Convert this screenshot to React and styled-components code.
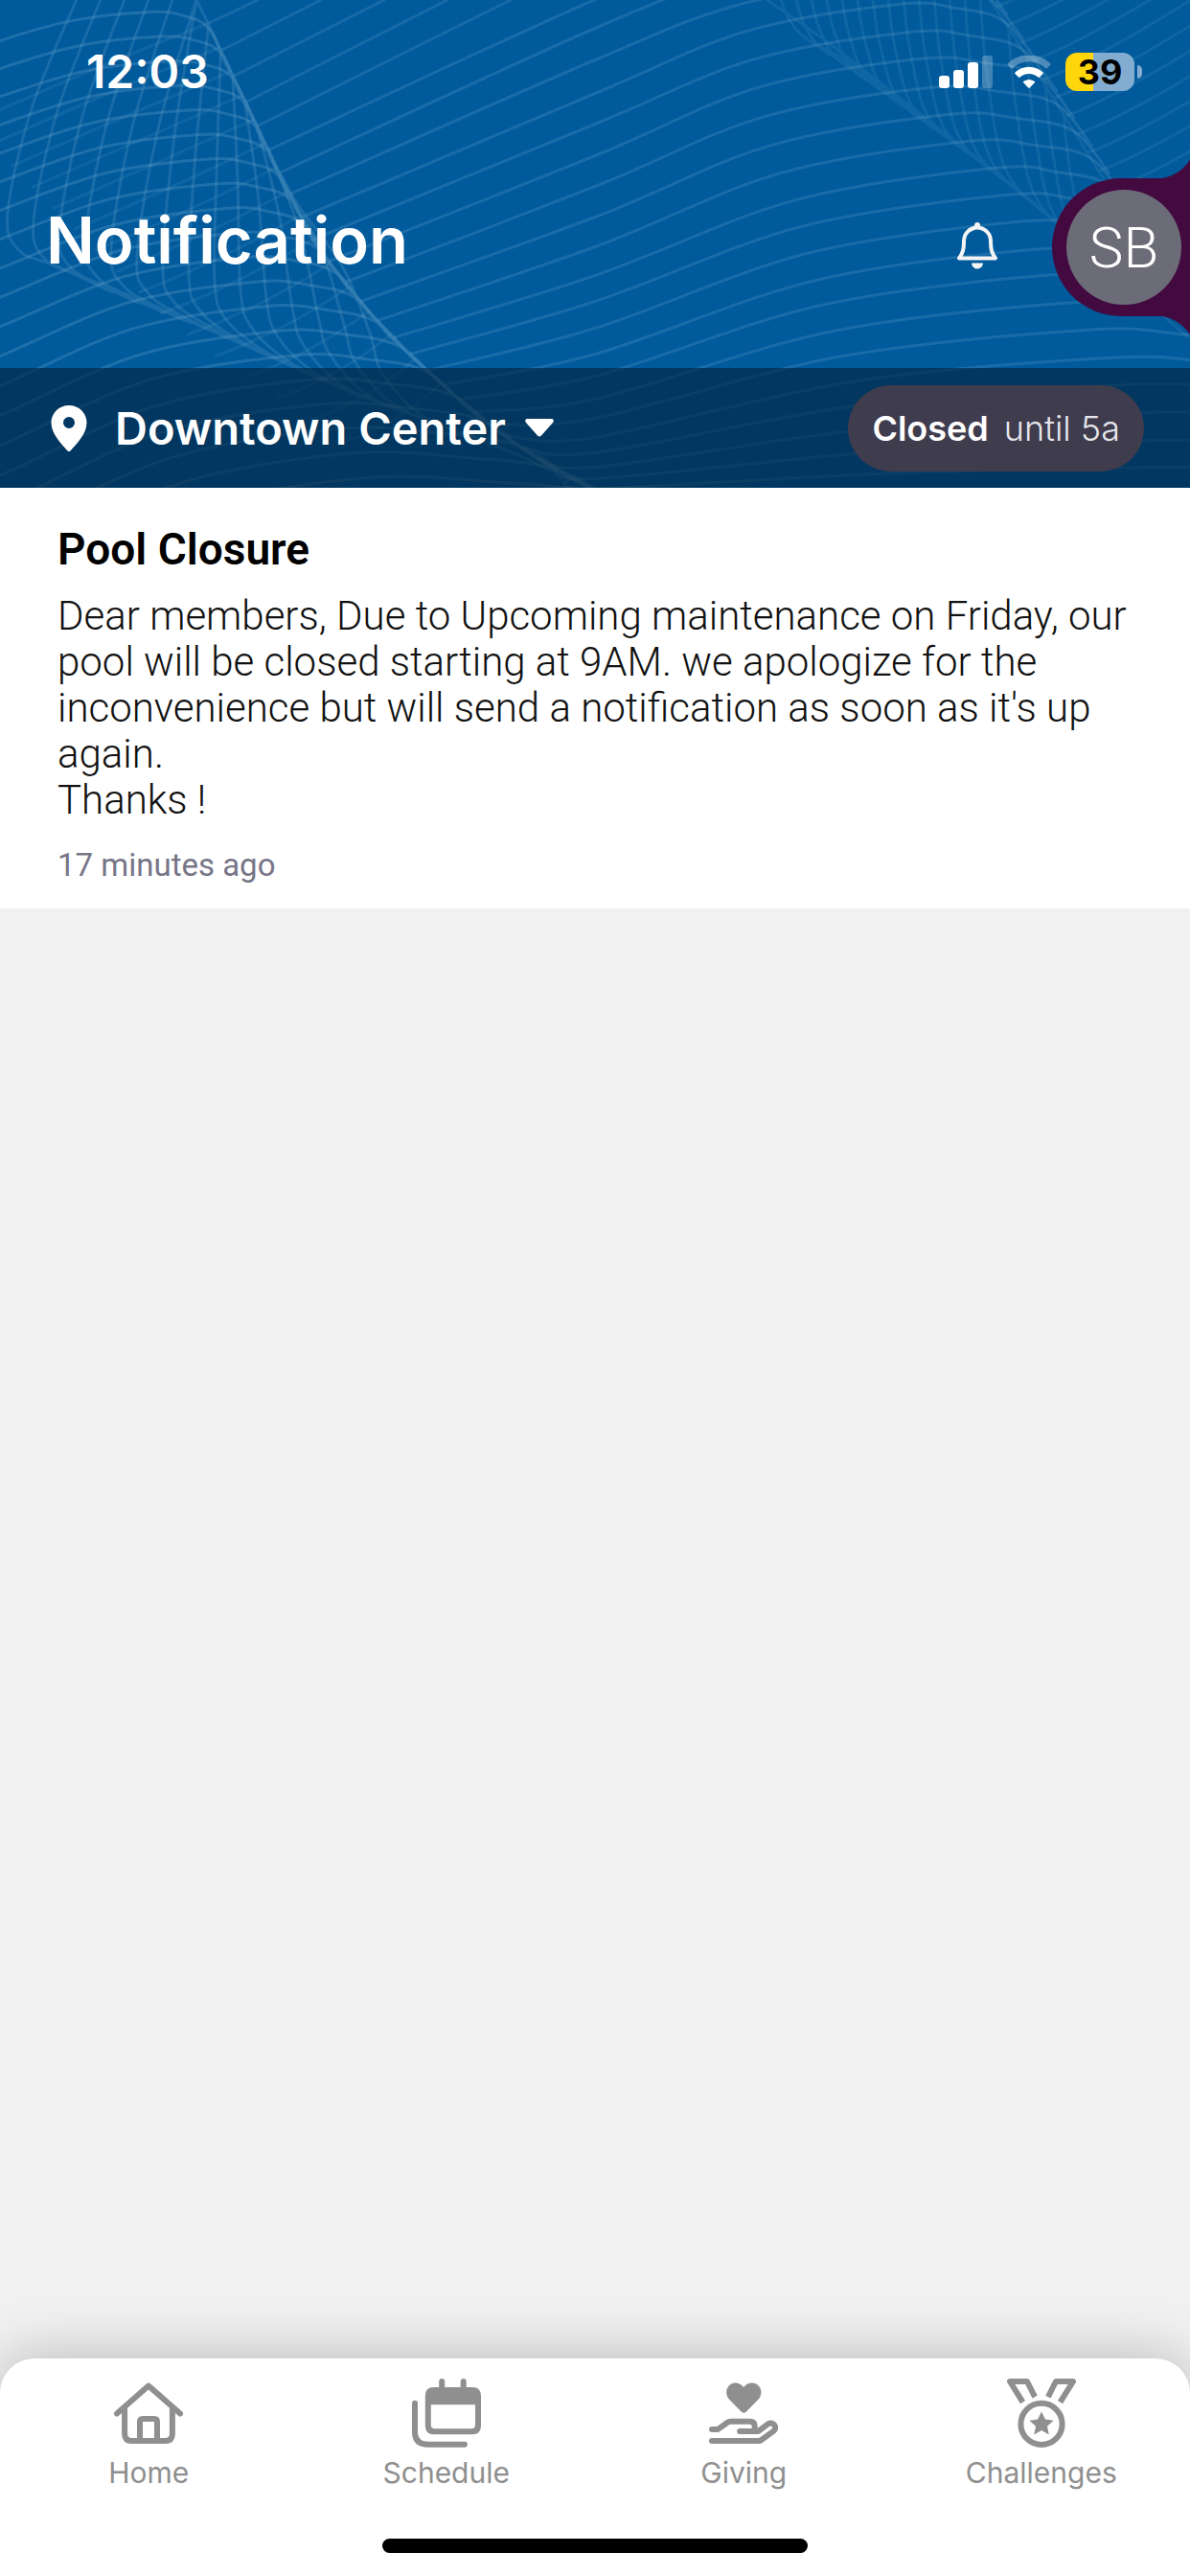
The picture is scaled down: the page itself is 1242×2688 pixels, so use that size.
import React from "react";
import styled, { createGlobalStyle } from "styled-components";

const GlobalStyle = createGlobalStyle`
  * {
    box-sizing: border-box;
  }
  body {
    margin: 0;
    background-color: #f1f1f1;
    font-family: Inter, "Liberation Sans", sans-serif;
  }
  h1, h2, p {
    margin: 0;
  }
  button {
    border: none;
    padding: 0;
    background: none;
    color: inherit;
    font-family: inherit;
    cursor: pointer;
  }
  svg {
    display: block;
  }
`;

const LayoutPage = styled.div`
  min-height: 100vh;
  display: flex;
  flex-direction: column;
`;

const Header = styled.header`
  position: relative;
  overflow: hidden;
  background-color: #005a9c;
  color: #ffffff;
`;

const WavesSvg = styled.svg`
  position: absolute;
  top: 0;
  left: 0;
  width: 100%;
  height: 100%;
  fill: none;
  stroke: #7fb4d6;
  stroke-width: 3;
`;

const StatusBar = styled.div`
  position: relative;
  display: flex;
  justify-content: space-between;
  align-items: center;
  height: 150px;
  padding: 0 50px 0 90px;
`;

const Clock = styled.span`
  font-size: 48px;
  font-weight: 600;
  line-height: 48px;
`;

const StatusIcons = styled.div`
  display: flex;
  align-items: center;
  gap: 15px;
`;

const Battery = styled.div`
  display: flex;
  align-items: center;
  gap: 3px;
`;

const BatteryBody = styled.div`
  width: 72px;
  height: 40px;
  border-radius: 12px;
  background: linear-gradient(to right, #ffd60a 40%, #82add0 40%);
  color: #000000;
  font-size: 36px;
  font-weight: 700;
  line-height: 40px;
  text-align: center;
`;

const BatteryTip = styled.div`
  width: 5px;
  height: 14px;
  border-radius: 0 5px 5px 0;
  background-color: #82add0;
`;

const TitleRow = styled.div`
  position: relative;
  display: flex;
  align-items: center;
  padding: 36px 0 54px 48px;
`;

const Title = styled.h1`
  flex: 1;
  padding-bottom: 14px;
  font-size: 67px;
  font-weight: 600;
  line-height: 84px;
`;

const BellButton = styled.button`
  margin-right: 56px;
  padding-bottom: 4px;
`;

const ProfileTab = styled.button`
  position: relative;
  height: 144px;
  padding: 0 9px 0 15px;
  border-radius: 72px 0 0 72px;
  background-color: #430a40;

  &::before,
  &::after {
    content: "";
    position: absolute;
    right: 0;
    width: 36px;
    height: 42px;
  }
  &::before {
    bottom: 100%;
    background: radial-gradient(circle at 0 0, transparent 42px, #430a40 43px);
  }
  &::after {
    top: 100%;
    background: radial-gradient(circle at 0 100%, transparent 42px, #430a40 43px);
  }
`;

const Avatar = styled.span`
  display: flex;
  justify-content: center;
  align-items: center;
  width: 120px;
  height: 120px;
  border-radius: 50%;
  background-color: #6c6b78;
  color: #ffffff;
  font-family: Roboto, sans-serif;
  font-size: 60px;
  font-weight: 300;
`;

const LocationBar = styled.div`
  position: relative;
  display: flex;
  justify-content: space-between;
  align-items: center;
  height: 125px;
  padding: 0 48px;
  background-color: rgba(1, 32, 56, 0.6);
`;

const LocationButton = styled.button`
  display: flex;
  align-items: center;
  font-size: 47px;
  font-weight: 600;
  line-height: 60px;

  span {
    margin: 0 20px 0 24px;
  }
`;

const HoursPill = styled.div`
  display: flex;
  align-items: center;
  gap: 16px;
  height: 90px;
  padding: 0 25px;
  border-radius: 45px;
  background-color: #3f3c4e;
  font-size: 36px;
  font-weight: 300;
  color: #e6e6ea;

  strong {
    font-weight: 600;
    color: #ffffff;
  }
`;

const Content = styled.main`
  flex: 1;
`;

const NotificationCard = styled.article`
  padding: 36px 60px 24px;
  background-color: #ffffff;
  font-family: Roboto, sans-serif;
`;

const CardTitle = styled.h2`
  color: #000000;
  font-size: 46px;
  font-weight: 600;
  line-height: 56px;
`;

const CardText = styled.p`
  margin-top: 18px;
  color: #111111;
  font-size: 42px;
  font-weight: 300;
  line-height: 48px;
`;

const CardTime = styled.p`
  margin-top: 23px;
  color: #777587;
  font-size: 33px;
  line-height: 42px;
`;

const BottomNav = styled.nav`
  padding: 21px 0 24px;
  border-radius: 36px 36px 0 0;
  background-color: #ffffff;
  box-shadow: 0 0 60px rgba(0, 0, 0, 0.25);
`;

const Tabs = styled.div`
  display: grid;
  grid-template-columns: repeat(4, 1fr);
`;

const Tab = styled.a`
  display: flex;
  flex-direction: column;
  align-items: center;
  gap: 8px;
  color: #8f8f8f;
  font-size: 30px;
  line-height: 36px;
  text-decoration: none;
`;

const HomeIndicator = styled.div`
  width: 444px;
  height: 15px;
  margin: 51px auto 0;
  border-radius: 8px;
  background-color: #000000;
`;

// smooth path through a list of points
function curve(points) {
  let d = `M${points[0][0]} ${points[0][1]}`;
  for (let i = 0; i < points.length - 1; i++) {
    const p0 = points[i - 1] || points[i];
    const p1 = points[i];
    const p2 = points[i + 1];
    const p3 = points[i + 2] || p2;
    d += `C${p1[0] + (p2[0] - p0[0]) / 6} ${p1[1] + (p2[1] - p0[1]) / 6} `;
    d += `${p2[0] - (p3[0] - p1[0]) / 6} ${p2[1] - (p3[1] - p1[1]) / 6} `;
    d += `${p2[0]} ${p2[1]}`;
  }
  return d;
}

// x of a fold edge at a given y
function edgeX(edge, y) {
  for (let i = 0; i < edge.length - 1; i++) {
    const [x1, y1] = edge[i];
    const [x2, y2] = edge[i + 1];
    if (y <= y2 || i === edge.length - 2) {
      return x1 + ((x2 - x1) * (y - y1)) / (y2 - y1);
    }
  }
}

function edgeY(edge, x) {
  return edgeX(edge.map(([a, b]) => [b, a]), x);
}

const foldA = [
  [205, 0], [228, 47], [258, 110], [296, 190], [330, 255],
  [372, 310], [412, 355], [455, 395], [500, 435], [555, 475], [621, 512],
];
const foldB = [
  [-60, 190], [0, 252], [52, 278], [135, 313], [220, 345],
  [290, 376], [365, 409], [450, 440], [540, 475], [621, 512],
];
const foldC = [
  [1033, 0], [1072, 60], [1112, 123], [1152, 187], [1200, 250], [1260, 310],
];
const foldD = [
  [800, 0], [867, 47], [960, 120], [1036, 178], [1100, 230], [1180, 300],
];

const crests = Array.from({ length: 20 }, (_, n) => {
  const xc = 158 + n * 10 + (n > 12 ? (n - 12) * 4 : 0);
  const yc = 13 + n * 25.6;
  const ys = 43 + n * 29 + (n * n) / 12;
  const end = yc + 17;
  const xe = edgeX(foldA, end);
  return [
    [-90, ys + 34],
    [0, ys],
    [xc * 0.5, yc + (ys - yc) * 0.28],
    [xc, yc],
    [xc + (xe - xc) * 0.55, yc + 4],
    [xe - 2, end],
    [edgeX(foldA, end + 40) - 2, end + 40],
    [edgeX(foldA, end + 85), end + 85],
  ];
});

// y on the first fold, y halfway, y and x of the second crest
const swells = [
  [157, 0, -72, 900], [181, 30, -46, 910], [203, 63, -20, 925],
  [227, 98, 5, 938], [250, 130, 34, 950], [273, 163, 62, 958],
  [295, 195, 92, 970], [315, 227, 120, 989], [335, 258, 148, 1009],
  [353, 288, 176, 1037], [370, 315, 204, 1049], [387, 343, 232, 1061],
  [402, 370, 261, 1076], [417, 393, 288, 1088], [430, 417, 317, 1108],
  [443, 437, 345, 1132], [455, 457, 374, 1156], [467, 473, 402, 1175],
  [478, 488, 431, 1195], [488, 500, 460, 1215], [498, 510, 488, 1235],
];

const verticals = Array.from({ length: 15 }, (_, j) => {
  const xm = 8 + j * 27;
  const ym = 222 + j * 9;
  const top = j < 6 ? 0 : (j - 6) * 26;
  const xt = j < 6 ? xm + 72 - j * 2 : edgeX(foldA, top);
  return [
    [xt, top],
    [xm + (xt - xm) * 0.36, top + (ym - top) * 0.5],
    [xm, ym],
    [xm + 12, ym + 40],
    [xm + 52, edgeY(foldB, xm + 52) - 3],
    [xm + 110, edgeY(foldB, xm + 110)],
  ];
});

const secondVerticals = Array.from({ length: 18 }, (_, i) => {
  const top = i < 14 ? 0 : (i - 13) * 30;
  const x = i < 14 ? 815 + i * 16 : edgeX(foldC, top);
  const bottom = edgeY(foldD, x + 55);
  return [
    [x, top],
    [x + 8, top + (bottom - top) * 0.4],
    [x + 28, top + (bottom - top) * 0.85],
    [x + 80, edgeY(foldD, x + 80)],
    [x + 130, edgeY(foldD, x + 130)],
  ];
});

function Waves() {
  return (
    <WavesSvg
      viewBox="0 0 1242 510"
      preserveAspectRatio="xMidYMid slice"
      aria-hidden="true"
    >
      <g opacity="0.24">
        {crests.map((points, i) => (
          <path key={i} d={curve(points)} />
        ))}
      </g>
      <g opacity="0.2">
        {verticals.map((points, i) => (
          <path key={i} d={curve(points)} />
        ))}
        <path d={curve(foldA)} />
        <path d={curve(foldB.slice(4))} />
      </g>
      {/* straight lines running off the top edge */}
      <g opacity="0.18">
        {[25, 53, 80, 107, 132].map((y, i) => (
          <path
            key={y}
            d={`M${edgeX(foldA, y)} ${y}L${270 + i * 66} 0`}
          />
        ))}
      </g>
      <g opacity="0.12">
        {Array.from({ length: 16 }, (_, i) => {
          const y = 25 + i * 25;
          const x = edgeX(foldA, y);
          const reach = Math.max(60, 250 - i * 10);
          return (
            <path
              key={i}
              d={`M${x} ${y}Q${x - reach / 2} ${y + 48} ${x - reach} ${
                y + 105 - i * 3
              }`}
            />
          );
        })}
      </g>
      <g opacity="0.2">
        {swells.map(([y0, y1, y2, x2], i) => {
          const x0 = edgeX(foldA, y0);
          const xe = Math.max(edgeX(foldC, y2 + 16), x2 + 70);
          return (
            <path
              key={i}
              d={curve([
                [x0, y0],
                [621, y1],
                [621 + (x2 - 621) * 0.5, y2 + (y1 - y2) * 0.3],
                [x2, y2],
                [x2 + (xe - x2) * 0.55, y2 + 4],
                [xe, y2 + 17],
                [xe + 38, y2 + 62],
              ])}
            />
          );
        })}
      </g>
      {/* second fold */}
      <g opacity="0.13">
        {secondVerticals.map((points, i) => (
          <path key={i} d={curve(points)} />
        ))}
        <path d={curve(foldC)} />
        <path d={curve(foldD)} />
        {Array.from({ length: 11 }, (_, i) => {
          const y = 8 + i * 19;
          const x = edgeX(foldC, y);
          return (
            <path key={i} d={`M${x} ${y}Q${x + 70} ${y - 26} ${x + 220} ${y - 125}`} />
          );
        })}
      </g>
    </WavesSvg>
  );
}

function SignalIcon() {
  return (
    <svg width="56" height="34" viewBox="0 0 56 34" fill="#fff">
      <rect x="0" y="21" width="11" height="13" rx="3" />
      <rect x="15" y="15" width="11" height="19" rx="3" />
      <rect x="30" y="7" width="11" height="27" rx="3" />
      <rect x="45" y="0" width="11" height="34" rx="3" opacity="0.25" />
    </svg>
  );
}

function WifiIcon() {
  return (
    <svg width="46" height="34" viewBox="0 0 46 34" fill="#fff">
      <path
        d="M1 8a32 32 0 0 1 44 0q1 1 0 2l-3 3q-1 1-2 0a25 25 0 0 0-34 0q-1 1-2 0l-3-3q-1-1 0-2z"
        opacity="0.3"
      />
      <path d="M8.500 17.500a21 21 0 0 1 29 0q.8.8 0 1.600l-3.500 3.500q-.8.800-1.600 0a14 14 0 0 0-18.800 0q-.8.800-1.600 0l-3.500-3.500q-.8-.800 0-1.600z" />
      <path d="M16.500 27.500a9.500 9.500 0 0 1 13 0l-5.700 6q-.8.800-1.600 0z" />
    </svg>
  );
}

function BellIcon() {
  return (
    <svg width="44" height="50" viewBox="0 0 44 50" fill="none">
      <path
        d="M3 38.500C7 33 8 29 8 20.500a14 14 0 0 1 28 0C36 29 37 33 41 38.500Z"
        stroke="#f4f4f4"
        strokeWidth="4"
        strokeLinejoin="round"
      />
      <path d="M19 7V4a3 3 0 0 1 6 0v3z" fill="#f4f4f4" />
      <path d="M16 43.500h12a6 6 0 0 1-12 0z" fill="#f4f4f4" />
    </svg>
  );
}

function PinIcon() {
  return (
    <svg width="48" height="48" viewBox="0 0 48 48" fill="#fff">
      <path
        fillRule="evenodd"
        d="M24 0C13.500 0 5.500 8 5.500 18c0 12 11 22.500 16.800 29.300q1.700 1.500 3.400 0C31.500 40.500 42.500 30 42.500 18 42.500 8 34.500 0 24 0zm0 12a6 6 0 1 1 0 12 6 6 0 0 1 0-12z"
      />
    </svg>
  );
}

function CaretIcon() {
  return (
    <svg width="30" height="20" viewBox="0 0 30 20" fill="#fff">
      <path d="M2 0h26q3 1 1 4L17 17.500q-2 2-4 0L1 4q-2-3 1-4z" />
    </svg>
  );
}

function TabIcon({ children }) {
  return (
    <svg
      width="72"
      height="72"
      viewBox="0 0 24 24"
      fill="none"
      stroke="currentColor"
      strokeWidth="2"
      strokeLinecap="round"
      strokeLinejoin="round"
    >
      {children}
    </svg>
  );
}

const tabs = [
  {
    id: "home",
    title: "Home",
    icon: (
      <>
        <path d="M1 12.200 12 2.500l11 9.700" />
        <path d="M3.700 10.500v8.700q0 2.500 2.500 2.500h11.600q2.500 0 2.500-2.500v-8.700" />
        <path d="M9 21.500v-6.500q0-1 1-1h4q1 0 1 1v6.500" />
      </>
    ),
  },
  {
    id: "schedule",
    title: "Schedule",
    icon: (
      <>
        <path d="M10.400 1v3M17.900 1v3M1 8.600V18.500q0 4.400 4.400 4.400h12.900" />
        <path
          fill="currentColor"
          stroke="none"
          fillRule="evenodd"
          d="M7.600 3h13.400q3 0 3 3v10.400q0 3-3 3H7.600q-3 0-3-3V6q0-3 3-3zM6.600 9.100v7q0 1.300 1.300 1.300h12.800q1.300 0 1.300-1.300v-7z"
        />
      </>
    ),
  },
  {
    id: "giving",
    title: "Giving",
    icon: (
      <>
        <path
          fill="currentColor"
          stroke="none"
          d="M12.100 3.100C10.700 1 7.800 1 6.600 2.900c-.9 1.500-.6 3 .3 4.200l4.400 4.500q.8.700 1.600 0l4.400-4.500c.9-1.200 1.200-2.700.3-4.200-1.200-1.900-4.100-1.900-5.500 0z"
        />
        <path d="M1 17.700h2L6.200 15.400q.6-.5 1.400-.5h6.600q1.700 0 1.700 1.700v1.500M10.700 18.300h6.500l3.300-2.500c1.900-1.100 3.500 1.200 1.900 2.500l-4 2.900q-.6.500-1.300.500H1" />
      </>
    ),
  },
  {
    id: "challenges",
    title: "Challenges",
    icon: (
      <>
        <circle cx="12" cy="15.800" r="7.200" />
        <path strokeLinecap="butt" d="M5.500 8.200 1 1h6l2.700 5.400M18.500 8.200 23 1h-6l-2.700 5.400" />
        <path
          fill="currentColor"
          stroke="none"
          d="M12 11.500l1.300 2.700 2.900.4-2.200 2 .6 2.900-2.600-1.500-2.600 1.500.6-2.900-2.200-2 2.900-.4z"
        />
      </>
    ),
  },
];

export default class App extends React.Component {
  render() {
    const listaDeTabs = tabs.map((tab) => {
      return (
        <Tab key={tab.id} href={`#${tab.id}`}>
          <TabIcon>{tab.icon}</TabIcon>
          <span>{tab.title}</span>
        </Tab>
      );
    });

    return (
      <LayoutPage>
        <GlobalStyle />
        <Header>
          <Waves />
          <StatusBar>
            <Clock>12:03</Clock>
            <StatusIcons>
              <SignalIcon />
              <WifiIcon />
              <Battery>
                <BatteryBody>39</BatteryBody>
                <BatteryTip />
              </Battery>
            </StatusIcons>
          </StatusBar>

          <TitleRow>
            <Title>Notification</Title>
            <BellButton aria-label="Notifications">
              <BellIcon />
            </BellButton>
            <ProfileTab aria-label="Profile SB">
              <Avatar>SB</Avatar>
            </ProfileTab>
          </TitleRow>

          <LocationBar>
            <LocationButton>
              <PinIcon />
              <span>Downtown Center</span>
              <CaretIcon />
            </LocationButton>
            <HoursPill>
              <strong>Closed</strong>
              until 5a
            </HoursPill>
          </LocationBar>
        </Header>

        <Content>
          <NotificationCard>
            <CardTitle>Pool Closure</CardTitle>
            <CardText>
              Dear members, Due to Upcoming maintenance on Friday, our pool will
              be closed starting at 9AM. we apologize for the inconvenience but
              will send a notification as soon as it's up again.
              <br />
              Thanks !
            </CardText>
            <CardTime>17 minutes ago</CardTime>
          </NotificationCard>
        </Content>

        <BottomNav>
          <Tabs>{listaDeTabs}</Tabs>
          <HomeIndicator />
        </BottomNav>
      </LayoutPage>
    );
  }
}
